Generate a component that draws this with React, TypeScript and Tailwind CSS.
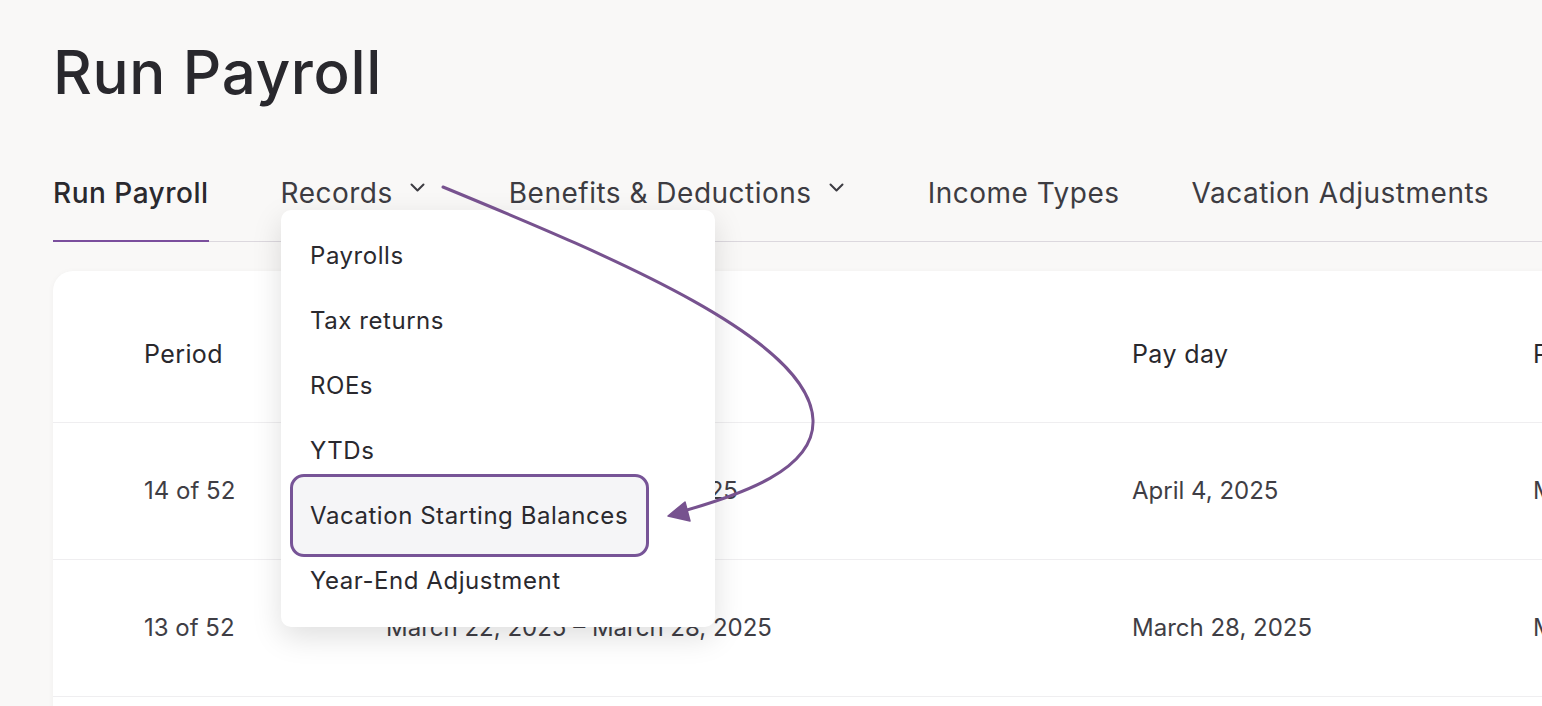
import React from 'react';

const TABS = [
  { label: 'Run Payroll', active: true, menu: false },
  { label: 'Records', active: false, menu: true },
  { label: 'Benefits & Deductions', active: false, menu: true },
  { label: 'Income Types', active: false, menu: false },
  { label: 'Vacation Adjustments', active: false, menu: false },
];

const ROWS = [
  { period: '14 of 52', range: 'March 29, 2025 – April 4, 2025', payDay: 'April 4, 2025', type: 'Manual' },
  { period: '13 of 52', range: 'March 22, 2025 – March 28, 2025', payDay: 'March 28, 2025', type: 'Manual' },
];

const MENU = ['Payrolls', 'Tax returns', 'ROEs', 'YTDs', 'Vacation Starting Balances', 'Year-End Adjustment'];

function Chevron() {
  return (
    <svg width="15" height="9" viewBox="0 0 15 9" fill="none" className="ml-[17px] mt-[4px] shrink-0">
      <path d="M1.5 1.5l6 6 6-6" stroke="#3d3c42" strokeWidth="2" strokeLinecap="round" strokeLinejoin="round" />
    </svg>
  );
}

function App() {
  return (
    <div
      className="relative h-screen w-full overflow-hidden bg-[#f9f8f7] text-[#29282d]"
      style={{ fontFamily: 'Inter, "Noto Sans", sans-serif' }}
    >
      <div className="pl-[53px]">
        {/* Header */}
        <h1 className="pt-[42px] text-[60px] leading-none font-medium tracking-[0.7px]">Run Payroll</h1>

        {/* Tabs */}
        <nav className="mt-[77px] flex w-[1600px] border-b border-[#dcd8de]">
          {TABS.map((tab) => (
            <div
              key={tab.label}
              className={`relative flex shrink-0 items-start whitespace-nowrap pb-[34px] text-[28px] leading-none tracking-[0.5px] ${
                tab.active ? 'font-medium text-[#2a292e]' : 'text-[#3d3c42]'
              } ${tab.menu ? 'mr-[84px]' : 'mr-[72px]'}`}
            >
              <span>{tab.label}</span>
              {tab.menu && <Chevron />}
              {tab.active && <span className="absolute left-0 right-0 -bottom-px h-[2px] bg-[#7b4f9d]" />}
            </div>
          ))}
        </nav>

        {/* Table card */}
        <div className="mt-[29px] w-[1600px] rounded-[20px] bg-white pt-[16px] shadow-[0_1px_6px_rgba(0,0,0,0.04)]">
          <div className="grid h-[136px] grid-cols-[242px_746px_401px_1fr] items-center whitespace-nowrap border-b border-[#efeef0] pl-[91px] text-[25px] tracking-[0.4px] text-[#29282d]">
            <span>Period</span>
            <span>Period dates</span>
            <span>Pay day</span>
            <span>Payroll type</span>
          </div>
          {ROWS.map((row) => (
            <div
              key={row.period}
              className="grid h-[137px] grid-cols-[242px_746px_401px_1fr] items-center whitespace-nowrap border-b border-[#efeef0] pl-[91px] text-[24px] text-[#3f3e45]"
            >
              <span>{row.period}</span>
              <span>{row.range}</span>
              <span>{row.payDay}</span>
              <span>{row.type}</span>
            </div>
          ))}
          <div className="h-[40px]" />
        </div>
      </div>

      {/* Records dropdown */}
      <div className="absolute left-[281px] top-[210px] w-[434px] rounded-[10px] bg-white pt-[13px] pb-[14px] shadow-[0_10px_30px_rgba(0,0,0,0.13)]">
        {MENU.map((item) => (
          <div key={item} className="relative flex h-[65px] items-center pl-[29px] text-[24px] tracking-[0.55px] text-[#2a292e]">
            {item === 'Vacation Starting Balances' && (
              <span className="absolute left-[9px] top-[-9px] h-[83px] w-[359px] rounded-[14px] border-[3px] border-[#775497] bg-[#f5f5f7]" />
            )}
            <span className="relative">{item}</span>
          </div>
        ))}
      </div>

      {/* Annotation arrow */}
      <svg className="pointer-events-none absolute left-0 top-0" width="1542" height="706" viewBox="0 0 1542 706" fill="none">
        <path
          d="M443 187 C620 260 810 340 813 420 C815 470 740 495 680 512"
          stroke="#77528f"
          strokeWidth="3"
          strokeLinecap="round"
        />
        <path d="M668 516 L685 502 L690 521 Z" fill="#77528f" stroke="#77528f" strokeWidth="1.5" strokeLinejoin="round" />
      </svg>
    </div>
  );
}

export default App;
